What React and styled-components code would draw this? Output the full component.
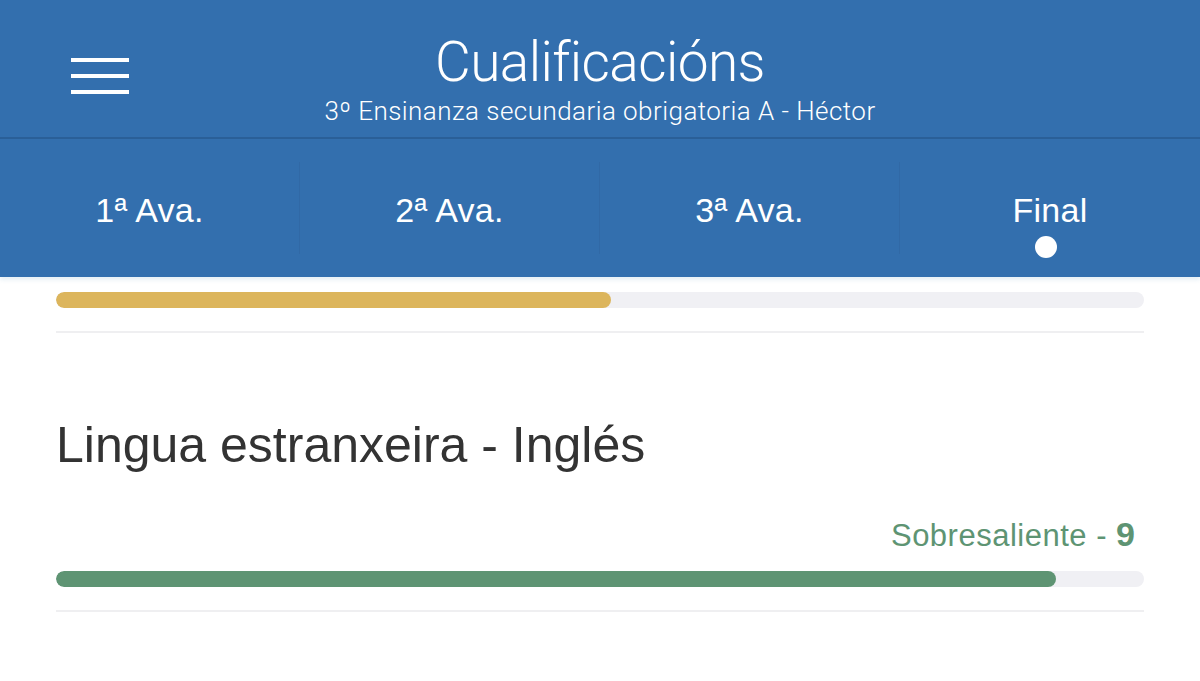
import styled, { createGlobalStyle } from "styled-components";

const Global = createGlobalStyle`
  html, body {
    margin: 0;
    padding: 0;
    background: #ffffff;
  }
  * { box-sizing: border-box; }
`;

const tabs = ["1ª Ava.", "2ª Ava.", "3ª Ava.", "Final"];

export default function App() {
  return (
    <Page>
      <Global />
      <Header>
        <Menu aria-label="menu">
          <span />
          <span />
          <span />
        </Menu>
        <Title>Cualificacións</Title>
        <Subtitle>3º Ensinanza secundaria obrigatoria A - Héctor</Subtitle>
      </Header>

      <Tabs>
        {tabs.map((t, i) => (
          <Tab key={t} $last={i === tabs.length - 1}>
            <TabLabel>{t}</TabLabel>
            {t === "Final" && <Dot />}
          </Tab>
        ))}
      </Tabs>

      <Content>
        <Subject $top>
          <Track>
            <Fill $color="#dcb55c" style={{ width: "51%" }} />
          </Track>
        </Subject>

        <Subject>
          <SubjectName>Lingua estranxeira - Inglés</SubjectName>
          <Grade>
            Sobresaliente - <b>9</b>
          </Grade>
          <Track>
            <Fill $color="#5e9473" style={{ width: "91.9%" }} />
          </Track>
        </Subject>
      </Content>
    </Page>
  );
}

const Page = styled.div`
  width: 1200px;
  height: 681px;
  overflow: hidden;
  background: #fff;
  font-family: "Liberation Sans", Arial, sans-serif;
`;

const Header = styled.header`
  position: relative;
  height: 139px;
  background: #336fae;
  border-bottom: 2px solid #2a5f98;
  display: flex;
  flex-direction: column;
  align-items: center;
  padding-top: 30px;
  color: #fff;
`;

const Menu = styled.div`
  position: absolute;
  left: 71px;
  top: 58px;
  width: 58px;
  display: flex;
  flex-direction: column;
  gap: 12px;
  span {
    display: block;
    height: 4px;
    background: #fff;
  }
`;

const Title = styled.h1`
  margin: 0;
  font-family: Roboto, "Liberation Sans", sans-serif;
  font-weight: 300;
  font-size: 55px;
  line-height: 64px;
  letter-spacing: -0.6px;
`;

const Subtitle = styled.div`
  margin-top: 2px;
  font-family: Roboto, "Liberation Sans", sans-serif;
  font-weight: 300;
  font-size: 26px;
  line-height: 30px;
  letter-spacing: 0.45px;
`;

const Tabs = styled.nav`
  height: 138px;
  background: #336fae;
  display: grid;
  grid-template-columns: repeat(4, 1fr);
  align-items: center;
  box-shadow: 0 3px 4px rgba(120, 170, 200, 0.18);
  position: relative;
`;

const Tab = styled.div`
  height: 92px;
  border-right: ${(p) => (p.$last ? "none" : "1px solid #3169a6")};
  display: flex;
  flex-direction: column;
  align-items: center;
  justify-content: center;
  padding-top: 4px;
  color: #fff;
  position: relative;
`;

const TabLabel = styled.div`
  font-size: 34px;
  line-height: 40px;
  letter-spacing: 0.3px;
`;

const Dot = styled.span`
  position: absolute;
  left: 50%;
  top: 74px;
  width: 22px;
  height: 22px;
  margin-left: -15px;
  border-radius: 50%;
  background: #fff;
`;

const Content = styled.main`
  padding: 0 56px;
`;

const Subject = styled.section`
  padding: ${(p) => (p.$top ? "15px 0 23px" : "83px 0 23px")};
  border-bottom: 2px solid #efeff1;
`;

const SubjectName = styled.h2`
  margin: 0;
  font-size: 50px;
  font-weight: 400;
  line-height: 58px;
  color: #333333;
`;

const Grade = styled.div`
  margin-top: 42px;
  padding-right: 9px;
  text-align: right;
  font-size: 31px;
  line-height: 36px;
  letter-spacing: 0.5px;
  color: #5e9473;
  b {
    font-size: 34px;
    font-weight: 700;
    letter-spacing: 0;
  }
`;

const Track = styled.div`
  height: 16px;
  border-radius: 8px;
  background: #f0f0f4;
  overflow: hidden;
  ${Grade} + & {
    margin-top: 17px;
  }
`;

const Fill = styled.div`
  height: 100%;
  border-radius: 8px;
  background: ${(p) => p.$color};
`;
